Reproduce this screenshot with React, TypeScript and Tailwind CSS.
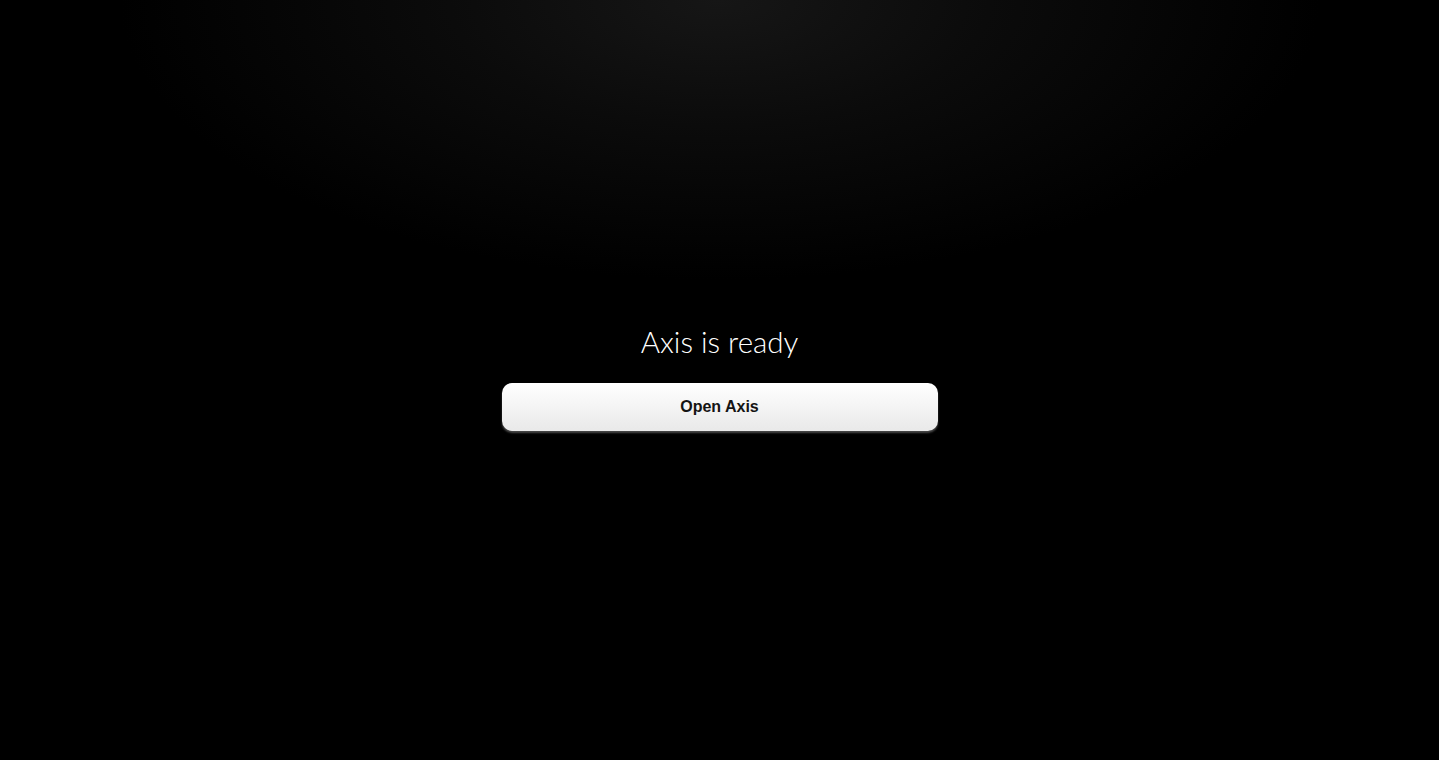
import React from "react";

export default function App() {
  return (
    <div className="h-[760px] w-full bg-black bg-[radial-gradient(ellipse_600px_280px_at_50%_0%,#161616_0%,#0b0b0b_45%,#000000_100%)] flex flex-col items-center pt-[322px]">
      <h1 className="text-[29.5px] leading-[40px] font-light text-white font-['Lato',sans-serif]">
        Axis is ready
      </h1>
      <button className="mt-[21px] w-[436px] h-[48px] rounded-[10px] bg-[linear-gradient(180deg,#ffffff_0%,#e9e9e9_100%)] shadow-[0_2px_2px_rgba(120,120,120,0.6)] text-[16px] font-bold text-[#141414] font-['Liberation_Sans',sans-serif]">
        Open Axis
      </button>
    </div>
  );
}
